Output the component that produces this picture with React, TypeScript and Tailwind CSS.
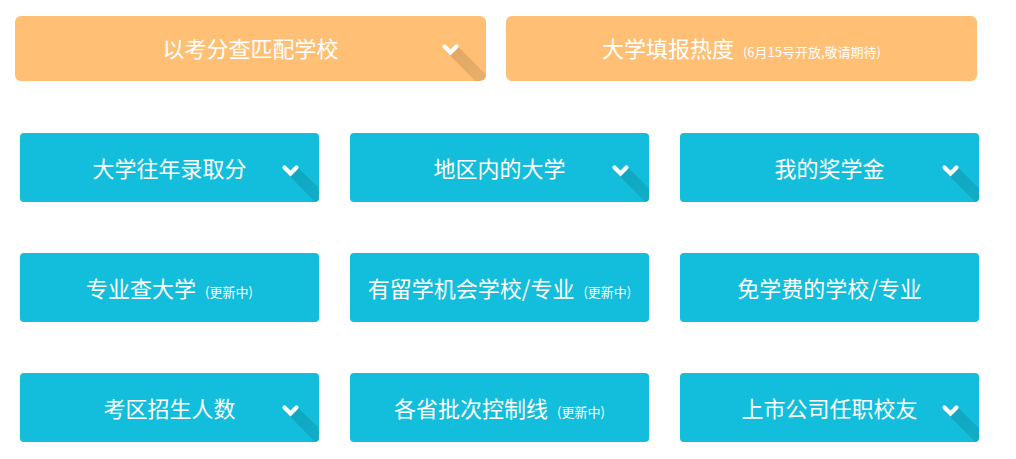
import { useId } from 'react';

type Item = {
  label: string;
  note?: string;
  arrow?: boolean;
};

const rows: Item[][] = [
  [
    { label: '大学往年录取分', arrow: true },
    { label: '地区内的大学', arrow: true },
    { label: '我的奖学金', arrow: true },
  ],
  [
    { label: '专业查大学', note: '(更新中)' },
    { label: '有留学机会学校/专业', note: '(更新中)' },
    { label: '免学费的学校/专业' },
  ],
  [
    { label: '考区招生人数', arrow: true },
    { label: '各省批次控制线', note: '(更新中)' },
    { label: '上市公司任职校友', arrow: true },
  ],
];

function Chevron({ className }: { className: string }) {
  const id = useId();
  return (
    <svg className={className} width="90" height="90" viewBox="0 0 90 90" overflow="visible">
      <defs>
        <linearGradient id={id} x1="0" y1="0" x2="1" y2="1">
          <stop offset="0" stopColor="#000" stopOpacity="0.13" />
          <stop offset="1" stopColor="#000" stopOpacity="0.04" />
        </linearGradient>
      </defs>
      <polygon points="14.5,1 84.5,71 76,80 1.5,5 8.5,11.5" fill={`url(#${id})`} />
      <polyline
        points="2.5,2.5 8.5,8.5 14.5,2.5"
        fill="none"
        stroke="#fff"
        strokeWidth="4.2"
        strokeLinecap="round"
        strokeLinejoin="miter"
      />
    </svg>
  );
}

function Tile({ item }: { item: Item }) {
  return (
    <div className="relative flex h-[69px] items-baseline justify-center overflow-hidden rounded-[4px] bg-[#12bedb] pt-[20px] text-white">
      <span className="text-[22px] leading-[28px]">{item.label}</span>
      {item.note && <span className="ml-[9px] text-[13px]">{item.note}</span>}
      {item.arrow && <Chevron className="absolute left-[262px] top-[32px] h-[90px] w-[90px]" />}
    </div>
  );
}

export default function App() {
  return (
    <div className="min-h-[459px] w-[1016px] bg-white px-[15px] pt-[16px] font-['Noto_Sans_CJK_SC','Microsoft_YaHei',sans-serif]">
      <div className="flex gap-[20px]">
        <div className="relative flex h-[65px] w-[471px] items-baseline justify-center overflow-hidden rounded-[6px] bg-[#ffbf74] pt-[17px] text-white">
          <span className="text-[22px] leading-[29px]">以考分查匹配学校</span>
          <Chevron className="absolute left-[427px] top-[28px] h-[90px] w-[90px]" />
        </div>
        <div className="flex h-[65px] w-[471px] items-baseline justify-center rounded-[6px] bg-[#ffbf74] pt-[17px] text-white">
          <span className="text-[22px] leading-[29px]">大学填报热度</span>
          <span className="ml-[9px] text-[13px]">(6月15号开放,敬请期待)</span>
        </div>
      </div>
      <div className="mt-[52px] flex flex-col gap-[51px] pl-[5px]">
        {rows.map((row, i) => (
          <div key={i} className="grid grid-cols-[299px_299px_299px] gap-[31px]">
            {row.map((item) => (
              <Tile key={item.label} item={item} />
            ))}
          </div>
        ))}
      </div>
    </div>
  );
}
